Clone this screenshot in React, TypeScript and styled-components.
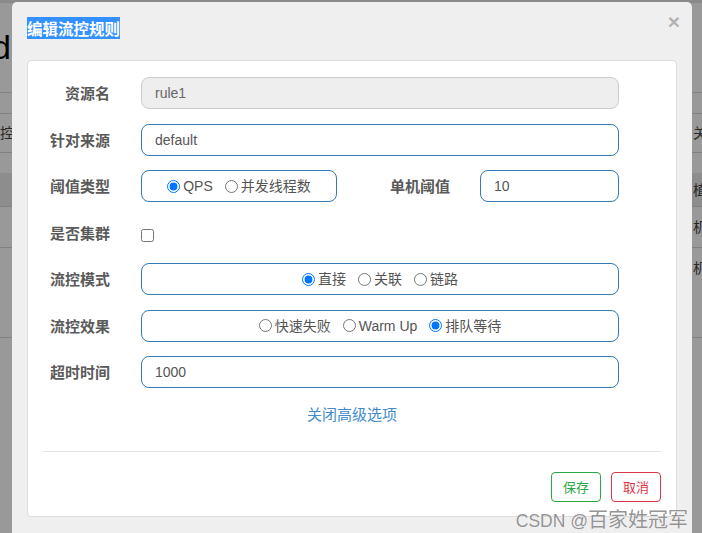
import React from 'react';
import styled, { createGlobalStyle } from 'styled-components';

const FONT = `"Liberation Sans", "Noto Sans CJK SC", sans-serif`;

const GlobalStyle = createGlobalStyle`
  html, body { margin: 0; padding: 0; }
  body {
    width: 702px;
    height: 533px;
    overflow: hidden;
    background: #fff;
    font-family: ${FONT};
  }
`;

const Screen = styled.div`
  position: relative;
  width: 702px;
  height: 533px;
  overflow: hidden;
  background: #fff;
`;

/* ---------- page underneath the backdrop ---------- */
const Page = styled.div`
  display: flex;
  flex-direction: column;
  width: 702px;
`;

const NavBar = styled.div`
  height: 3px;
  background: #e6e6e6;
`;

const PageHeading = styled.h1`
  margin: 0 0 0 -8px;
  height: 90px;
  box-sizing: border-box;
  padding-top: 24px;
  font: 400 34px/40px ${FONT};
  color: #000;
  border-bottom: 1px solid #d8d8d8;
`;

const PageRow = styled.div<{ $h: number; $bg?: string; $line?: boolean }>`
  display: grid;
  grid-template-columns: 693px 9px;
  align-items: center;
  height: ${(p) => p.$h}px;
  box-sizing: border-box;
  background: ${(p) => p.$bg || 'transparent'};
  border-bottom: ${(p) => (p.$line ? '1px solid #d8d8d8' : 'none')};
  font: 400 14px/20px ${FONT};
  color: #444;
`;

const PageCell = styled.div`
  white-space: nowrap;
  overflow: hidden;
`;

const Backdrop = styled.div`
  position: absolute;
  inset: 0;
  background: rgba(0, 0, 0, 0.4);
`;

/* ---------- modal ---------- */
const Modal = styled.div`
  position: absolute;
  left: 12px;
  top: 2px;
  width: 680px;
  bottom: -10px;
  background: #efefef;
  border-radius: 5px 5px 0 0;
  display: flex;
  flex-direction: column;
`;

const Header = styled.div`
  display: flex;
  justify-content: space-between;
  align-items: flex-start;
  padding: 15px 12px 21px 15px;
`;

const Title = styled.h4`
  margin: 0;
  font: 700 15.5px/22px "Noto Sans CJK SC", sans-serif;
  color: #fff;
  background: #3390ff;
`;

const Close = styled.span`
  font: 700 21px/1 ${FONT};
  color: #b3b3b3;
  margin-top: -6px;
`;

const Card = styled.div`
  margin: 0 15px;
  background: #fff;
  border: 1px solid #dcdcdc;
  border-radius: 4px;
  padding: 16px 15px 14px;
  display: flex;
  flex-direction: column;
`;

const Form = styled.div`
  display: flex;
  flex-direction: column;
  gap: 14.5px;
`;

const Row = styled.div`
  display: grid;
  grid-template-columns: 67px 478px;
  column-gap: 31px;
  height: 32px;
  align-items: center;
`;

const Label = styled.label<{ $w?: number }>`
  font: 700 15px/32px "Noto Sans CJK SC", sans-serif;
  color: #5a5a5a;
  text-align: right;
  white-space: nowrap;
  ${(p) => (p.$w ? `width: ${p.$w}px; flex: none;` : '')}
`;

const TextInput = styled.input<{ $w?: number }>`
  box-sizing: border-box;
  width: ${(p) => (p.$w ? `${p.$w}px` : '100%')};
  height: 32px;
  padding: 0 13px;
  border: 1px solid #337ab7;
  border-radius: 8px;
  background: #fff;
  font: 400 14px ${FONT};
  color: #555;
  outline: none;
  &:disabled {
    background: #eee;
    border-color: #ccc;
    color: #666;
  }
`;

const Split = styled.div`
  display: flex;
  align-items: center;
`;

const RadioBox = styled.div<{ $w?: number }>`
  box-sizing: border-box;
  width: ${(p) => (p.$w ? `${p.$w}px` : '100%')};
  flex: none;
  height: 32px;
  border: 1px solid #337ab7;
  border-radius: 8px;
  display: flex;
  align-items: center;
  justify-content: center;
  gap: 12px;
`;

const RadioItem = styled.label`
  display: inline-flex;
  align-items: center;
  gap: 3px;
  font: 400 14px/20px ${FONT};
  color: #555;
  white-space: nowrap;
`;

const Radio = styled.input`
  margin: 0;
  width: 13px;
  height: 13px;
`;

const Check = styled.input`
  margin: 6px 0 0 0;
  width: 13px;
  height: 13px;
`;

const CheckCell = styled.div`
  display: flex;
  align-items: center;
  height: 32px;
`;

const Toggle = styled.a`
  display: block;
  margin-top: 16px;
  text-align: center;
  font: 400 15px/20px "Noto Sans CJK SC", sans-serif;
  color: #428bca;
  text-decoration: none;
`;

const Divider = styled.hr`
  margin: 27px 0 0;
  border: 0;
  border-top: 1px solid #e5e5e5;
`;

const Footer = styled.div`
  display: flex;
  justify-content: flex-end;
  gap: 10px;
  margin-top: 20px;
`;

const Button = styled.button<{ $color: string }>`
  width: 50px;
  height: 30px;
  padding: 0;
  background: #fff;
  border: 1px solid ${(p) => p.$color};
  border-radius: 4px;
  color: ${(p) => p.$color};
  font: 400 13px/28px "Noto Sans CJK SC", sans-serif;
`;

const Watermark = styled.div`
  position: absolute;
  right: 14px;
  bottom: 1px;
  font: 400 20px/26px "Noto Sans CJK SC", sans-serif;
  color: rgba(120, 120, 120, 0.8);
  text-shadow: 0 0 1px rgba(255, 255, 255, 0.9);
  white-space: nowrap;
`;

const WatermarkLatin = styled.span`
  font: 400 17.5px ${FONT};
`;

export default function App() {
  return (
    <Screen>
      <GlobalStyle />
      <Page>
        <NavBar />
        <PageHeading>d</PageHeading>
        <PageRow $h={21} $line />
        <PageRow $h={39} $line>
          <PageCell>控</PageCell>
          <PageCell>关</PageCell>
        </PageRow>
        <PageRow $h={20} />
        <PageRow $h={34} $bg="#ececec" $line>
          <PageCell></PageCell>
          <PageCell>植</PageCell>
        </PageRow>
        <PageRow $h={41} $line>
          <PageCell></PageCell>
          <PageCell>机</PageCell>
        </PageRow>
        <PageRow $h={90} $line>
          <PageCell></PageCell>
          <PageCell style={{ alignSelf: 'start', paddingTop: 10 }}>机</PageCell>
        </PageRow>
      </Page>
      <Backdrop />
      <Modal>
        <Header>
          <Title>编辑流控规则</Title>
          <Close>×</Close>
        </Header>
        <Card>
          <Form>
            <Row>
              <Label>资源名</Label>
              <TextInput disabled defaultValue="rule1" />
            </Row>
            <Row>
              <Label>针对来源</Label>
              <TextInput defaultValue="default" />
            </Row>
            <Row>
              <Label>阈值类型</Label>
              <Split>
                <RadioBox $w={196}>
                  <RadioItem>
                    <Radio type="radio" name="grade" defaultChecked />
                    QPS
                  </RadioItem>
                  <RadioItem>
                    <Radio type="radio" name="grade" />
                    并发线程数
                  </RadioItem>
                </RadioBox>
                <Label $w={113}>单机阈值</Label>
                <TextInput $w={139} style={{ marginLeft: 30 }} defaultValue="10" />
              </Split>
            </Row>
            <Row>
              <Label>是否集群</Label>
              <CheckCell>
                <Check type="checkbox" />
              </CheckCell>
            </Row>
            <Row>
              <Label>流控模式</Label>
              <RadioBox>
                <RadioItem>
                  <Radio type="radio" name="strategy" defaultChecked />
                  直接
                </RadioItem>
                <RadioItem>
                  <Radio type="radio" name="strategy" />
                  关联
                </RadioItem>
                <RadioItem>
                  <Radio type="radio" name="strategy" />
                  链路
                </RadioItem>
              </RadioBox>
            </Row>
            <Row>
              <Label>流控效果</Label>
              <RadioBox>
                <RadioItem>
                  <Radio type="radio" name="behavior" />
                  快速失败
                </RadioItem>
                <RadioItem>
                  <Radio type="radio" name="behavior" />
                  Warm Up
                </RadioItem>
                <RadioItem>
                  <Radio type="radio" name="behavior" defaultChecked />
                  排队等待
                </RadioItem>
              </RadioBox>
            </Row>
            <Row>
              <Label>超时时间</Label>
              <TextInput defaultValue="1000" />
            </Row>
          </Form>
          <Toggle href="#">关闭高级选项</Toggle>
          <Divider />
          <Footer>
            <Button $color="#28a745">保存</Button>
            <Button $color="#dc3545">取消</Button>
          </Footer>
        </Card>
      </Modal>
      <Watermark>
        <WatermarkLatin>CSDN @</WatermarkLatin>百家姓冠军
      </Watermark>
    </Screen>
  );
}
